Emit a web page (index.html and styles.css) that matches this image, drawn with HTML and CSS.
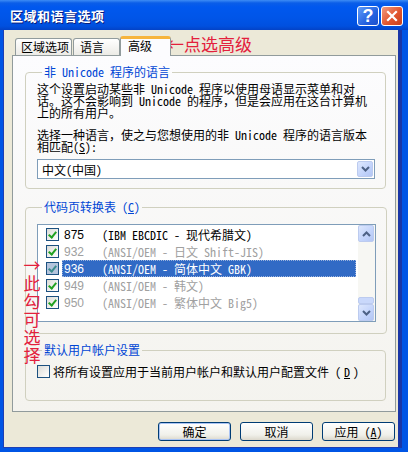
FILE: index.html
```html
<html>
	<head>
		<title>区域和语言选项</title>
		<link rel="stylesheet" href="styles.css">
	</head>
	<body>
		<div class="window">
			<div class="titlebar">
				<span class="title">区域和语言选项</span>
				<div class="tb-buttons">
					<span class="tb-btn help">?</span>
					<span class="tb-btn close">
						<svg width="12" height="12" viewBox="0 0 12 12"><path d="M2 2 L10 10 M10 2 L2 10" stroke="#fff" stroke-width="2.2" stroke-linecap="square"/></svg>
					</span>
				</div>
			</div>
			<div class="frame">
				<div class="client">
					<div class="tabs">
						<div class="tab tab1">区域选项</div>
						<div class="tab tab2">语言</div>
						<div class="tab active">高级</div>
					</div>
					<div class="panel">
						<fieldset class="group g1">
							<legend>非 Unicode 程序的语言</legend>
							<p class="txt">这个设置启动某些非 Unicode 程序以使用母语显示菜单和对<br>话。这不会影响到 Unicode 的程序，但是会应用在这台计算机<br>上的所有用户。</p>
							<p class="txt second">选择一种语言，使之与您想使用的非 Unicode 程序的语言版本<br>相匹配(<u>S</u>):</p>
							<div class="combo">
								<span class="combo-text">中文(中国)</span>
								<span class="arrow-btn"><svg width="9" height="6" viewBox="0 0 9 6"><path d="M1 1 L4.5 4.5 L8 1" fill="none" stroke="#4d6185" stroke-width="2"/></svg></span>
							</div>
						</fieldset>
						<fieldset class="group g2">
							<legend>代码页转换表 (<u>C</u>)</legend>
							<div class="listbox">
								<div class="rows">
									<div class="row"><span class="chk on"></span><span class="item"><span class="num">875</span><span class="desc">(IBM EBCDIC - 现代希腊文)</span></span></div>
									<div class="row gray"><span class="chk on"></span><span class="item"><span class="num">932</span><span class="desc">(ANSI/OEM - 日文 Shift-JIS)</span></span></div>
									<div class="row sel"><span class="chk on dis"></span><span class="item"><span class="num">936</span><span class="desc">(ANSI/OEM - 简体中文 GBK)</span></span></div>
									<div class="row gray"><span class="chk on"></span><span class="item"><span class="num">949</span><span class="desc">(ANSI/OEM - 韩文)</span></span></div>
									<div class="row gray"><span class="chk on"></span><span class="item"><span class="num">950</span><span class="desc">(ANSI/OEM - 繁体中文 Big5)</span></span></div>
								</div>
								<div class="scrollbar">
									<span class="arrow-btn sb-btn"><svg width="9" height="6" viewBox="0 0 9 6"><path d="M1 5 L4.5 1.5 L8 5" fill="none" stroke="#4d6185" stroke-width="2"/></svg></span>
									<span class="track"><span class="thumb"></span></span>
									<span class="arrow-btn sb-btn"><svg width="9" height="6" viewBox="0 0 9 6"><path d="M1 1 L4.5 4.5 L8 1" fill="none" stroke="#4d6185" stroke-width="2"/></svg></span>
								</div>
							</div>
						</fieldset>
						<fieldset class="group g3">
							<legend>默认用户帐户设置</legend>
							<div class="check-line"><span class="chk"></span>将所有设置应用于当前用户帐户和默认用户配置文件 (<u>D</u>)</div>
						</fieldset>
					</div>
					<div class="buttons">
						<span class="btn default">确定</span>
						<span class="btn">取消</span>
						<span class="btn">应用 (<u>A</u>)</span>
					</div>
					<div class="note-top">←点选高级</div>
					<div class="note-side">→<br>此<br>勾<br>可<br>选<br>择</div>
				</div>
			</div>
		</div>
	</body>
</html>
```
FILE: styles.css
```css
*{
	margin:0px;
	padding:0px;
	box-sizing:border-box;
}
body{
	width:408px;
	height:452px;
	overflow:hidden;
	font-family:"Noto Sans Mono CJK SC","Noto Sans CJK SC",monospace;
	font-size:12px;
	background-color:#0055e5;
}
.window{
	display:flex;
	flex-direction:column;
	width:408px;
	height:452px;
	background-color:#0055e5;
}
.titlebar{
	height:30px;
	display:flex;
	align-items:center;
	justify-content:space-between;
	padding:0 5px 0 10px;
	background:linear-gradient(#3d8cf5 0px,#0a5ee8 3px,#0058ee 7px,#0055e8 18px,#0050df 26px,#0342c6 30px);
}
.title{
	color:#ffffff;
	font-family:"Noto Sans CJK SC",sans-serif;
	font-weight:bold;
	font-size:13px;
	text-shadow:1px 1px #0a1c7a;
	letter-spacing:0.5px;
}
.tb-buttons{
	display:flex;
	gap:2px;
	margin-top:2px;
}
.tb-btn{
	width:22px;
	height:20px;
	border:1px solid #ffffff;
	border-radius:3px;
	display:flex;
	align-items:center;
	justify-content:center;
	color:#ffffff;
	font-family:"Liberation Sans",sans-serif;
	font-weight:bold;
	font-size:18px;
}
.help{
	background:linear-gradient(135deg,#5f9cf8,#2563e0 60%,#1c50cc);
}
.close{
	background:linear-gradient(135deg,#f09a80,#e2562f 55%,#c8401c);
}
.frame{
	flex:1;
	padding:0 6px 4px 3px;
}
.client{
	position:relative;
	height:100%;
	background-color:#ece9d8;
	border-left:1px solid #1d3fb4;
	border-right:4px solid #1a36a6;
	border-bottom:1px solid #1d3fb4;
	padding:6px 2px 0 8px;
}
.tabs{
	display:flex;
	align-items:flex-end;
	height:19px;
	padding-left:3px;
}
.tab{
	height:17px;
	border:1px solid #919b9c;
	border-bottom:none;
	border-radius:3px 3px 0 0;
	background:linear-gradient(#ffffff,#ecebe6);
	font-family:"Noto Sans CJK SC",sans-serif;
	line-height:15px;
	padding-left:5px;
}
.tab1{
	width:57px;
}
.tab2{
	width:47px;
	margin-left:1px;
	padding-left:6px;
}
.active{
	position:relative;
	z-index:1;
	width:51px;
	height:20px;
	margin-bottom:-1px;
	margin-left:0px;
	background:#fcfcfe;
	border-top:3px solid #f6b43c;
	padding-left:7px;
	line-height:14px;
}
.panel{
	height:357px;
	border:1px solid #919b9c;
	background:linear-gradient(#fcfcfe,#f4f3ee);
	padding:10px 9px 0 12px;
}
.group{
	border:1px solid #d0d0bf;
	border-radius:4px;
	padding:5px 10px 9px 11px;
}
.group legend{
	margin-left:5px;
	padding:0 2px;
	color:#0046d5;
	line-height:12px;
	font-family:"Noto Sans Mono CJK SC","Noto Sans CJK SC",monospace;
}
.txt{
	line-height:12px;
	white-space:nowrap;
}
.second{
	margin-top:10px;
}
.combo{
	margin-top:6px;
	height:20px;
	border:1px solid #7f9db9;
	background:#ffffff;
	display:flex;
	align-items:center;
	justify-content:space-between;
	padding:0 1px 0 4px;
}
.arrow-btn{
	width:16px;
	height:16px;
	border:1px solid #bccbef;
	border-radius:2px;
	background:linear-gradient(135deg,#dde7fd,#c2d3fb 60%,#b3c6f4);
	display:flex;
	align-items:center;
	justify-content:center;
}
.g2{
	margin-top:12px;
	padding:11px 10px 11px 11px;
}
.listbox{
	height:98px;
	border:1px solid #7f9db9;
	background:#ffffff;
	display:flex;
	justify-content:space-between;
}
.rows{
	padding:1px 0 0 8px;
	width:320px;
}
.row{
	height:17px;
	display:flex;
	align-items:center;
}
.chk{
	width:13px;
	height:13px;
	border:1px solid #1c5180;
	background:linear-gradient(135deg,#dcdcd7,#ffffff);
	position:relative;
	flex-shrink:0;
}
.chk.on::after{
	content:"";
	position:absolute;
	left:3px;
	top:1px;
	width:3px;
	height:6px;
	border-right:2px solid #21a121;
	border-bottom:2px solid #21a121;
	transform:rotate(40deg);
}
.chk.dis{
	background:#b4c4dc;
}
.chk.dis::after{
	border-color:#3c8c8c;
}
.item{
	display:flex;
	align-items:center;
	height:17px;
	width:294px;
	margin-left:3px;
	padding-left:2px;
}
.num{
	width:38px;
	font-family:"Liberation Sans",sans-serif;
	font-size:12px;
}
.desc{
	white-space:nowrap;
}
.gray{
	color:#a0a0a0;
}
.sel .item{
	background:#316ac5;
	color:#ffffff;
	outline:1px dotted #9bb3dd;
	outline-offset:-1px;
}
.scrollbar{
	width:17px;
	display:flex;
	flex-direction:column;
	background:#f7f7f3;
	padding:0 1px 0 0;
}
.sb-btn{
	height:17px;
}
.track{
	flex:1;
	display:flex;
	flex-direction:column;
	justify-content:flex-end;
}
.thumb{
	height:7px;
	border:1px solid #bccbef;
	border-radius:2px;
	background:#c9d8fb;
}
.g3{
	margin-top:10px;
	padding:8px 10px 22px 11px;
}
.check-line{
	display:flex;
	align-items:center;
	height:14px;
	gap:3px;
	white-space:nowrap;
}
.buttons{
	display:flex;
	justify-content:flex-end;
	gap:9px;
	margin-top:10px;
	padding-right:1px;
}
.btn{
	width:73px;
	height:19px;
	border:1px solid #003c74;
	border-radius:3px;
	background:linear-gradient(#ffffff,#f0f0ea 70%,#dcd8cc);
	text-align:center;
	line-height:17px;
}
.default{
	box-shadow:inset 0 0 0 1px #aac4f4;
}
.note-top{
	position:absolute;
	left:163px;
	top:4px;
	color:#e3203c;
	font-family:"Noto Sans CJK SC",sans-serif;
	font-size:17px;
	line-height:20px;
}
.note-side{
	position:absolute;
	left:18px;
	top:226px;
	width:20px;
	text-align:center;
	color:#e3203c;
	font-family:"Noto Sans CJK SC",serif;
	font-size:17px;
	line-height:18px;
}
```
